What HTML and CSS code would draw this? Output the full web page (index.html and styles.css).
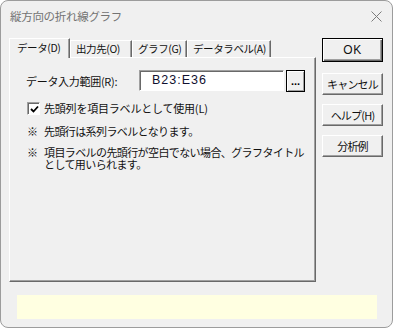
FILE: index.html
```html
<!DOCTYPE html>
<html lang="ja">
<head>
  <meta charset="UTF-8" />
  <meta name="viewport" content="width=device-width, initial-scale=1.0"/>
  <title>縦方向の折れ線グラフ</title>
  <link rel="stylesheet" href="styles.css">
</head>
<body>

  <div class="window">
    <div class="titlebar">
      <span class="title">縦方向の折れ線グラフ</span>
      <svg class="close" width="11" height="11" viewBox="0 0 11 11">
        <path d="M0.5 0.5 L10.5 10.5 M10.5 0.5 L0.5 10.5" stroke="#7c7c7c" stroke-width="1" fill="none"/>
      </svg>
    </div>

    <div class="main">
      <div class="tab-area">
        <div class="tabs">
          <div class="tab active tab-data">データ(D)</div>
          <div class="tab tab-output">出力先(O)</div>
          <div class="tab tab-graph">グラフ(G)</div>
          <div class="tab tab-label">データラベル(A)</div>
        </div>
        <div class="panel">
          <div class="field">
            <span class="field-label">データ入力範囲(R):</span>
            <div class="range-input">B23:E36</div>
            <button class="ref-btn">...</button>
          </div>
          <div class="check">
            <span class="box">
              <svg width="9" height="9" viewBox="0 0 9 9">
                <path d="M1 4 L3.5 6.5 L8 1.5" stroke="#000" stroke-width="1.8" fill="none"/>
              </svg>
            </span>
            <span>先頭列を項目ラベルとして使用(L)</span>
          </div>
          <div class="note">
            <span class="mark">※</span>
            <span>先頭行は系列ラベルとなります。</span>
          </div>
          <div class="note">
            <span class="mark">※</span>
            <span class="note-lines">
              <span>項目ラベルの先頭行が空白でない場合、グラフタイトル</span>
              <span>として用いられます。</span>
            </span>
          </div>
        </div>
      </div>

      <div class="side-buttons">
        <button class="btn default">OK</button>
        <button class="btn">キャンセル</button>
        <button class="btn">ヘルプ(H)</button>
        <button class="btn">分析例</button>
      </div>
    </div>

    <div class="status"></div>
  </div>

</body>
</html>
```

FILE: styles.css
```css
* {
  box-sizing: border-box;
}

body {
  margin: 0px;
  padding: 0px;
  background: #ffffff;
  font-family: "Noto Sans CJK JP", "Noto Sans", sans-serif;
  font-size: 11px;
  letter-spacing: -0.6px;
  color: #111;
}

.window {
  width: 393px;
  height: 328px;
  background: #f0f0f0;
  border: 1px solid #9c9c9c;
  border-radius: 8px;
  display: flex;
  flex-direction: column;
}

.titlebar {
  height: 29px;
  display: flex;
  align-items: center;
  justify-content: space-between;
  padding: 0 10px 0 9px;
}

.title {
  color: #737373;
  font-size: 11.5px;
  letter-spacing: -0.3px;
  line-height: 14px;
}

.close {
  display: block;
  margin-top: 1px;
}

.main {
  display: flex;
  padding: 8px 0 0 8px;
}

.tab-area {
  width: 307px;
  display: flex;
  flex-direction: column;
}

.tabs {
  height: 19px;
  display: flex;
  align-items: flex-end;
}

.tab {
  height: 17px;
  line-height: 15px;
  padding-left: 5px;
  border-top: 1px solid #fff;
  border-left: 1px solid #fff;
  border-right: 1px solid #696969;
  box-shadow: inset -1px 0 0 #a0a0a0;
  white-space: nowrap;
  font-size: 10.5px;
  letter-spacing: -0.4px;
}

.tab.active {
  height: 20px;
  line-height: 17px;
  padding-left: 7px;
  margin-bottom: -1px;
  background: #f0f0f0;
  position: relative;
  z-index: 1;
}

.tab-data {
  width: 61px;
}

.tab-output {
  width: 62px;
}

.tab-graph {
  width: 55px;
}

.tab-label {
  width: 84px;
}

.panel {
  height: 225px;
  border-top: 1px solid #fff;
  border-left: 1px solid #fff;
  border-right: 1px solid #696969;
  border-bottom: 1px solid #696969;
  box-shadow: inset -1px -1px 0 #a0a0a0;
  padding: 12px 0 0 16px;
}

.field {
  display: flex;
  align-items: flex-start;
}

.field-label {
  width: 113px;
  line-height: 22px;
  letter-spacing: -0.3px;
}

.range-input {
  width: 145px;
  height: 21px;
  background: #fff;
  border-top: 1px solid #a0a0a0;
  border-left: 1px solid #a0a0a0;
  border-right: 1px solid #fff;
  border-bottom: 1px solid #fff;
  box-shadow: inset 1px 1px 0 #696969;
  padding-left: 12px;
  line-height: 19px;
  font-family: "Liberation Sans", sans-serif;
  font-size: 12.5px;
  letter-spacing: 1px;
  color: #101030;
}

.ref-btn {
  width: 19px;
  height: 22px;
  margin-left: 2px;
  padding: 0;
  background: #f0f0f0;
  border: 1px solid #000;
  box-shadow: inset 1px 1px 0 #fff, inset -1px -1px 0 #a0a0a0;
  font-family: "Liberation Sans", sans-serif;
  font-size: 11px;
  font-weight: bold;
  letter-spacing: 0px;
  line-height: 14px;
  color: #000;
}

.check {
  display: flex;
  align-items: center;
  margin: 10px 0 0 1px;
  height: 13px;
  line-height: 13px;
  white-space: nowrap;
  letter-spacing: -0.2px;
}

.box {
  width: 13px;
  height: 13px;
  margin-right: 4px;
  background: #fff;
  border-top: 1px solid #a0a0a0;
  border-left: 1px solid #a0a0a0;
  border-right: 1px solid #fff;
  border-bottom: 1px solid #fff;
  box-shadow: inset 1px 1px 0 #696969;
  display: flex;
  align-items: center;
  justify-content: center;
  padding: 1px 0 0 1px;
}

.box svg {
  display: block;
}

.note {
  display: flex;
  margin: 10px 0 0 1px;
  line-height: 13px;
  white-space: nowrap;
}

.note + .note {
  margin-top: 8px;
}

.note-lines {
  display: flex;
  flex-direction: column;
  line-height: 12px;
}

.mark {
  width: 17px;
  flex-shrink: 0;
}

.side-buttons {
  width: 61px;
  margin-left: 6px;
  display: flex;
  flex-direction: column;
  gap: 9px;
}

.btn {
  height: 22px;
  padding: 0;
  background: #f0f0f0;
  border-top: 1px solid #fff;
  border-left: 1px solid #fff;
  border-right: 1px solid #696969;
  border-bottom: 1px solid #696969;
  box-shadow: inset -1px -1px 0 #a0a0a0;
  font-family: "Noto Sans CJK JP", sans-serif;
  font-size: 11px;
  letter-spacing: -0.8px;
  color: #111;
}

.btn.default {
  height: 24px;
  margin-bottom: 2px;
  border: 1px solid #000;
  box-shadow: inset 1px 1px 0 #fff, inset -1px -1px 0 #696969, inset -2px -2px 0 #a0a0a0;
  font-family: "Liberation Sans", sans-serif;
  font-size: 12px;
  letter-spacing: 0.5px;
}

.status {
  width: 360px;
  height: 24px;
  margin: 13px 0 0 16px;
  background: #ffffe1;
}
```
